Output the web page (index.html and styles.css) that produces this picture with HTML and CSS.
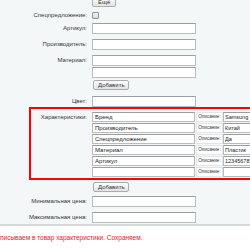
FILE: index.html
```html
<!DOCTYPE html>
<html lang="ru">
<head>
  <meta charset="UTF-8" />
  <title>Товар</title>
  <link rel="stylesheet" href="styles.css">
</head>
<body>
  <div class="form">
    <div class="row row-top">
      <span class="label"></span>
      <div><button class="btn">Ещё</button></div>
    </div>
    <div class="row row-check">
      <label class="label">Спецпредложение:</label>
      <div><span class="check"></span></div>
    </div>
    <div class="row row-field">
      <label class="label">Артикул:</label>
      <div><input class="field" type="text"></div>
    </div>
    <div class="row row-field">
      <label class="label">Производитель:</label>
      <div><input class="field" type="text"></div>
    </div>
    <div class="row row-field">
      <label class="label label-top">Материал:</label>
      <div class="stack">
        <input class="field" type="text">
        <input class="field" type="text">
        <button class="btn btn-add">Добавить</button>
      </div>
    </div>
    <div class="row row-color">
      <label class="label">Цвет:</label>
      <div><input class="field" type="text"></div>
    </div>

    <div class="props">
      <div class="row row-props">
        <label class="label label-top">Характеристики:</label>
        <div class="prop-list">
          <div class="prop">
            <input class="field prop-name" type="text" value="Бренд">
            <span class="prop-desc">Описание:</span>
            <input class="field prop-value" type="text" value="Samsung">
          </div>
          <div class="prop">
            <input class="field prop-name" type="text" value="Производитель">
            <span class="prop-desc">Описание:</span>
            <input class="field prop-value" type="text" value="Китай">
          </div>
          <div class="prop">
            <input class="field prop-name" type="text" value="Спецпредложение">
            <span class="prop-desc">Описание:</span>
            <input class="field prop-value" type="text" value="Да">
          </div>
          <div class="prop">
            <input class="field prop-name" type="text" value="Материал">
            <span class="prop-desc">Описание:</span>
            <input class="field prop-value" type="text" value="Пластик">
          </div>
          <div class="prop">
            <input class="field prop-name" type="text" value="Артикул">
            <span class="prop-desc">Описание:</span>
            <input class="field prop-value" type="text" value="12345678">
          </div>
          <div class="prop">
            <input class="field prop-name" type="text">
            <span class="prop-desc">Описание:</span>
            <input class="field prop-value" type="text">
          </div>
        </div>
      </div>
    </div>

    <div class="row row-after">
      <span class="label"></span>
      <div><button class="btn btn-add">Добавить</button></div>
    </div>
    <div class="row row-field">
      <label class="label">Минимальная цена:</label>
      <div><input class="field" type="text"></div>
    </div>
    <div class="row row-field row-last">
      <label class="label">Максимальная цена:</label>
      <div><input class="field" type="text"></div>
    </div>
  </div>

  <p class="note">писываем в товар характеристики. Сохраняем.</p>
</body>
</html>
```

FILE: styles.css
```css
* {
  margin: 0;
  padding: 0;
  box-sizing: border-box;
}

html, body {
  width: 100%;
  height: 100%;
  overflow: hidden;
  background: #ffffff;
  font-family: 'Liberation Sans', Arial, sans-serif;
  font-size: 6px;
  color: #333;
}

.form {
  background: #f4f7f7;
  border-bottom: 2px solid #d3d9d9;
  margin-top: -3px;
  padding-bottom: 1px;
}

.row {
  display: grid;
  grid-template-columns: 87px 1fr;
  column-gap: 5px;
  align-items: center;
}

.label {
  text-align: right;
  white-space: nowrap;
  font-size: 6px;
  line-height: 7px;
  color: #333;
}

.label-top {
  align-self: start;
  padding-top: 2px;
}

.row-check { margin-top: 5px; }
.row-field { margin-top: 5px; }
.row-check + .row-field { margin-top: 4px; }
.row-color { margin-top: 6px; }
.row-after { margin-top: 2px; }
.row-after + .row-field { margin-top: 4px; }

.field {
  display: block;
  width: 104px;
  height: 11px;
  border: 1px solid #b8bcbc;
  border-top-color: #9a9ea0;
  background: #fff;
  font-family: 'Liberation Sans', Arial, sans-serif;
  font-size: 6px;
  color: #222;
  padding: 0 2px;
  outline: none;
}

.stack .field + .field {
  margin-top: 1px;
}

.btn {
  display: block;
  height: 10px;
  padding: 0 4px;
  border: 1px solid #a9adad;
  border-radius: 2px;
  background: linear-gradient(#fefefe, #e2e4e4);
  font-family: 'Liberation Sans', Arial, sans-serif;
  font-size: 6px;
  color: #333;
  line-height: 8px;
}

.row-top .btn {
  padding: 0 5px;
}

.stack .btn-add {
  margin-top: 2px;
}

.btn-add {
  margin-left: 1px;
  width: 36px;
}

.check {
  display: block;
  width: 7px;
  height: 7px;
  border: 1px solid #8f9496;
  border-radius: 1px;
  background: linear-gradient(#f2f2f2, #d9dcdc);
}

.props {
  margin-left: 29px;
  width: 250px;
  border: 2px solid #ff0000;
  padding: 3px 0 1px;
}

.props .row {
  grid-template-columns: 56px 1fr;
}

.prop-list {
  display: flex;
  flex-direction: column;
  gap: 1px;
}

.prop {
  display: flex;
  align-items: stretch;
  height: 10px;
}

.prop .field {
  height: 10px;
}

.prop-name {
  width: 103px;
}

.prop-desc {
  flex: none;
  width: 27px;
  margin-left: 1px;
  background: #fff;
  border: 1px solid #e3e6e6;
  font-size: 4.6px;
  line-height: 8px;
  padding: 0;
  text-align: center;
  white-space: nowrap;
  color: #333;
}

.prop-value {
  flex: none;
  width: 60px;
  font-size: 5.5px;
  padding: 0 1px;
}

.note {
  margin-top: 8px;
  font-size: 6.5px;
  line-height: 8px;
  color: #e8161c;
  white-space: nowrap;
}
```
